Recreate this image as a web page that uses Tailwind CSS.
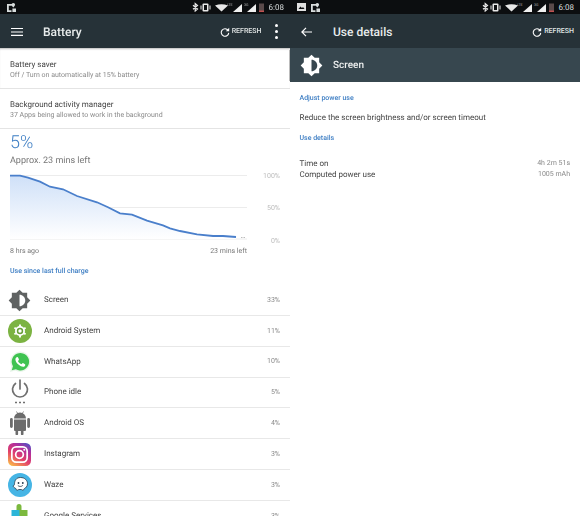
<!DOCTYPE html>
<html lang="en">
<head>
<meta charset="UTF-8">
<title>Battery</title>
<script src="https://cdn.jsdelivr.net/npm/@tailwindcss/browser@4"></script>
</head>
<body class="w-[580px] h-[516px] overflow-hidden bg-white font-['Roboto',sans-serif] [text-rendering:geometricPrecision]">
<div class="flex h-[516px] blur-[0.3px]">

  <!-- left: battery -->
  <div class="relative w-[290px] h-[516px] overflow-hidden flex flex-col">
    <div class="h-[14px] shrink-0 bg-[#0c0e10] flex items-center pl-[7px] pr-[6px]">
      <svg class="w-[9px] h-[9px]" viewBox="0 0 10 10"><path fill="#d8dcdc" d="M0 1h6v2H2v5h3v2H0zM7 0a2 2 0 0 1 2 2c0 1-2 3-2 3S5 3 5 2a2 2 0 0 1 2-2zM6 6h4v4H6z"/></svg>
      <div class="flex-1"></div>
      <svg class="w-[76px] h-[10px]" viewBox="0 0 76 10">
        <path fill="none" stroke="#e8e8e8" stroke-width="1.200" d="M2 3.200L6.500 7 4.200 9V1.500L6.500 3.500 2 7.200"/>
        <rect x="11.500" y="1.500" width="6" height="8" rx="1" fill="#e8e8e8"/><rect x="13" y="3" width="3" height="5" fill="#0c0e10"/><rect x="9.500" y="3.500" width="1" height="4" fill="#e8e8e8"/><rect x="18.500" y="3.500" width="1" height="4" fill="#e8e8e8"/>
        <path fill="#e8e8e8" d="M24 3.500Q30.500 1 37 3.500L30.500 9.500z"/>
        <text x="36" y="3.500" font-size="3.600" fill="#b0b0b0">LTE</text>
        <path fill="#f0f0f0" d="M42 10l9-8v8z"/>
        <text x="53" y="3.500" font-size="3.600" fill="#b0b0b0">3G</text>
        <path fill="#f0f0f0" d="M56 10l9-8v8z"/>
        <rect x="68" y="1.500" width="5" height="8.500" fill="#5a4a4a"/><rect x="68" y="8.500" width="5" height="1.500" fill="#c05050"/>
      </svg>
      <span class="ml-[2px] pt-[2px] text-[8px] text-[#d8dcdc]">6:08</span>
    </div>
    <div class="h-[34px] shrink-0 bg-[#263238] flex items-center pt-[1px]">
      <svg class="ml-[11px] w-[12px] h-[8px]" viewBox="0 0 12 8"><path fill="#fff" d="M0 0h12v1.100H0zM0 3.400h12v1.100H0zM0 6.800h12v1.100H0z"/></svg>
      <span class="ml-[20px] text-[12px] font-medium text-[#e8ecec]">Battery</span>
      <div class="flex-1"></div>
      <svg class="w-[10px] h-[10px]" viewBox="0 0 24 24"><path fill="none" stroke="#fff" stroke-width="2.600" d="M19.500 8A9 9 0 1 0 21 14"/><path fill="#fff" d="M22 2v8h-8z"/></svg>
      <span class="ml-[2px] text-[7px] font-medium text-[#dfe3e3]">REFRESH</span>
      <div class="ml-[13.500px] mr-[12px] flex flex-col gap-[3px]">
        <div class="w-[3px] h-[3px] rounded-full bg-white"></div>
        <div class="w-[3px] h-[3px] rounded-full bg-white"></div>
        <div class="w-[3px] h-[3px] rounded-full bg-white"></div>
      </div>
    </div>

    <div class="h-[41px] shrink-0 border-b border-[#e4e4e4] pl-[10px] pt-[11px] shadow-[inset_0_2px_2px_-1px_#bbb]">
      <div class="text-[8px] leading-[11px] text-[#444]">Battery saver</div>
      <div class="text-[7px] leading-[10px] text-[#8a8a8a]">Off / Turn on automatically at 15% battery</div>
    </div>
    <div class="h-[40px] shrink-0 border-b border-[#e4e4e4] pl-[10px] pt-[10px]">
      <div class="text-[8px] leading-[11px] text-[#444]">Background activity manager</div>
      <div class="text-[7px] leading-[10px] text-[#8a8a8a]">37 Apps being allowed to work in the background</div>
    </div>
    <div class="absolute left-[288.500px] top-[50px] w-[1.500px] h-[31px] bg-[#bbb]"></div>

    <div class="pl-[10px] shrink-0 h-[43px]">
      <div class="text-[18px] leading-[21px] mt-[3px] font-light text-[#3f7fc4]">5%</div>
      <div class="text-[9px] leading-[12px] mt-[2px] text-[#777]">Approx. 23 mins left</div>
    </div>

    <svg class="shrink-0 h-[68px] w-[290px]" viewBox="0 0 290 68">
      <defs><linearGradient id="fill" x1="0" y1="0" x2="0" y2="1"><stop offset="0" stop-color="#cfe0f8"/><stop offset="1" stop-color="#ffffff"/></linearGradient></defs>
      <path d="M10 3.500H247M10 35.500H247M10 67H247" stroke="#ececec" stroke-width="1"/>
      <path fill="url(#fill)" d="M10 3.700L20 3.700 28 5.700 40 9.700 50 14.700 63 17.300 77 24 97 30.300 108 35.300 120 41.300 132 42.700 147 48.700 163 53.300 170 56.300 180 59 197 62.300 213 64 223 64 236 65V67H10z"/>
      <path fill="none" stroke="#4a7fcb" stroke-width="1.800" d="M10 3.700L20 3.700 28 5.700 40 9.700 50 14.700 63 17.300 77 24 97 30.300 108 35.300 120 41.300 132 42.700 147 48.700 163 53.300 170 56.300 180 59 197 62.300 213 64 223 64 236 65"/>
      <path d="M241 65.500h1.500M243.500 65.500h1.500" stroke="#bbb" stroke-width="1"/>
    </svg>
    <div class="h-0 relative">
      <span class="absolute right-[10px] top-[-68px] text-[7px] leading-[9px] text-[#bbb]">100%</span>
      <span class="absolute right-[10px] top-[-36px] text-[7px] leading-[9px] text-[#bbb]">50%</span>
      <span class="absolute right-[10px] top-[-3px] text-[7px] leading-[9px] text-[#bbb]">0%</span>
    </div>
    <div class="flex justify-between w-[247px] pl-[10px] mt-[6px] text-[7px] leading-[10px] text-[#777] shrink-0">
      <span>8 hrs ago</span><span>23 mins left</span>
    </div>
    <div class="pl-[10px] mt-[10px] text-[7px] font-medium leading-[10px] text-[#3f7fc4] shrink-0">Use since last full charge</div>

    <div class="mt-[9.200px] flex flex-col">
      <div class="h-[30.800px] shrink-0 flex items-center border-b border-[#e8e8e8] pr-[10px]">
        <div class="w-[44px] flex justify-center pr-[5px]">
          <svg class="w-[23px] h-[23px]" viewBox="0 0 24 24"><path fill="#5f6262" fill-rule="evenodd" d="M20 15.310L23.310 12 20 8.690V4h-4.690L12 .69 8.690 4H4v4.690L.69 12 4 15.310V20h4.690L12 23.310 15.310 20H20v-4.690zM12 18V6c3.310 0 6 2.690 6 6s-2.690 6-6 6z"/></svg>
        </div>
        <span class="text-[8px] text-[#444]">Screen</span><span class="ml-auto text-[7px] text-[#888]">33%</span>
      </div>
      <div class="h-[30.800px] shrink-0 flex items-center border-b border-[#e8e8e8] pr-[10px]">
        <div class="w-[44px] flex justify-center pr-[5px]">
          <svg class="w-[24px] h-[24px]" viewBox="0 0 24 24"><circle cx="12" cy="12" r="12" fill="#7cb342"/><circle cx="12" cy="12" r="5" fill="#fff"/><path stroke="#fff" stroke-width="1.900" d="M12 5.500v13M6.400 8.750l11.200 6.500M6.400 15.250l11.200-6.500"/><circle cx="12" cy="12" r="3.200" fill="#689f38"/><circle cx="12" cy="12" r="1.700" fill="#fff"/></svg>
        </div>
        <span class="text-[8px] text-[#444]">Android System</span><span class="ml-auto text-[7px] text-[#888]">11%</span>
      </div>
      <div class="h-[30.800px] shrink-0 flex items-center border-b border-[#e8e8e8] pr-[10px]">
        <div class="w-[44px] flex justify-center pr-[5px]">
          <svg class="w-[22px] h-[22px]" viewBox="0 0 24 24"><path fill="#e8f5e9" d="M1 23l1.700-6A11 11 0 1 1 7 21.300z"/><path fill="#3fc351" d="M3 21l1.300-4.400A9.500 9.500 0 1 1 7.500 19.800z"/><path fill="#fff" d="M9 6.500c-.8 0-2 1-2 2.700 0 2 1.500 4 3.300 5.600 2 1.700 3.700 2.400 5 2.400 1.500 0 2.500-1.300 2.500-2.300 0-.4-2.300-1.700-2.700-1.700-.4 0-1 1.300-1.500 1.300-.8 0-3.700-2.500-3.700-3.500 0-.5 1-1 1-1.500S10 6.500 9 6.500z"/></svg>
        </div>
        <span class="text-[8px] text-[#444]">WhatsApp</span><span class="ml-auto text-[7px] text-[#888]">10%</span>
      </div>
      <div class="h-[30.800px] shrink-0 flex items-center border-b border-[#e8e8e8] pr-[10px]">
        <div class="w-[44px] flex justify-center pr-[5px]">
          <svg class="w-[20px] h-[26px]" viewBox="0 0 20 26"><path fill="none" stroke="#707070" stroke-width="1.700" stroke-linecap="round" d="M10 1v9M5.500 4.500a7.500 7.500 0 1 0 9 0"/><path stroke="#707070" stroke-width="1.500" stroke-dasharray="2 2" d="M5 23.500h10"/></svg>
        </div>
        <span class="text-[8px] text-[#444]">Phone idle</span><span class="ml-auto text-[7px] text-[#888]">5%</span>
      </div>
      <div class="h-[30.800px] shrink-0 flex items-center border-b border-[#e8e8e8] pr-[10px]">
        <div class="w-[44px] flex justify-center pr-[5px]">
          <svg class="w-[22px] h-[24px]" viewBox="0 0 22 24"><path fill="#6c6c6c" d="M5 7.500a6 6 0 0 1 12 0zM5 8.500h12v10.500a1 1 0 0 1-1 1h-1.500v3a1.300 1.300 0 0 1-2.600 0v-3H9.100v3a1.300 1.300 0 0 1-2.600 0v-3H6a1 1 0 0 1-1-1zM1 8.500a1.400 1.400 0 0 1 2.800 0v7a1.400 1.400 0 0 1-2.800 0zM18.200 8.500a1.400 1.400 0 0 1 2.800 0v7a1.400 1.400 0 0 1-2.800 0z"/><path stroke="#6c6c6c" stroke-width=".8" d="M7.500 0.500l1.500 2.500M14.500 0.500L13 3"/></svg>
        </div>
        <span class="text-[8px] text-[#444]">Android OS</span><span class="ml-auto text-[7px] text-[#888]">4%</span>
      </div>
      <div class="h-[30.800px] shrink-0 flex items-center border-b border-[#e8e8e8] pr-[10px]">
        <div class="w-[44px] flex justify-center pr-[5px]">
          <svg class="w-[23px] h-[23px]" viewBox="0 0 24 24"><defs><linearGradient id="ig" x1="0.200" y1="1" x2="0.800" y2="0"><stop offset="0" stop-color="#f9b34a"/><stop offset="0.400" stop-color="#e2406a"/><stop offset="0.750" stop-color="#b32f9c"/><stop offset="1" stop-color="#5a4fc0"/></linearGradient></defs><rect width="24" height="24" rx="5.500" fill="url(#ig)"/><rect x="4" y="4" width="16" height="16" rx="4.500" fill="none" stroke="#fff" stroke-width="1.800"/><circle cx="12" cy="12" r="4" fill="none" stroke="#fff" stroke-width="1.800"/><circle cx="17" cy="7" r="1.100" fill="#fff"/></svg>
        </div>
        <span class="text-[8px] text-[#444]">Instagram</span><span class="ml-auto text-[7px] text-[#888]">3%</span>
      </div>
      <div class="h-[30.800px] shrink-0 flex items-center border-b border-[#e8e8e8] pr-[10px]">
        <div class="w-[44px] flex justify-center pr-[5px]">
          <svg class="w-[24px] h-[24px]" viewBox="0 0 24 24"><circle cx="12" cy="12" r="12" fill="#46b5e5"/><path fill="#fff" stroke="#24384a" stroke-width=".8" d="M12.500 4.500c4.300 0 7 2.900 7 6.200 0 2.800-1.900 4.300-3.200 5-.3 1.600-2.200 1.900-2.900.8h-2.700c-.8 1.300-2.800.7-2.900-1-1.100-.4-2.300-1.200-2.800-2.600 1-.2 1.400-.7 1.500-2.200.1-3 1.700-6.200 6-6.200z"/><circle cx="10.500" cy="10" r=".9" fill="#24384a"/><circle cx="14.800" cy="10" r=".9" fill="#24384a"/><path fill="none" stroke="#24384a" stroke-width=".8" d="M9.800 12.400c1 1.400 3.900 1.400 5 0"/></svg>
        </div>
        <span class="text-[8px] text-[#444]">Waze</span><span class="ml-auto text-[7px] text-[#888]">3%</span>
      </div>
      <div class="h-[30.800px] shrink-0 flex items-center pr-[10px]">
        <div class="w-[44px] flex justify-center pr-[5px]">
          <svg class="w-[24px] h-[24px]" viewBox="0 0 24 24"><path fill="#7cb93e" d="M8.500 2.500a2.500 2.500 0 0 1 5 0V6h6v7H8.500z"/><path fill="#2bb5d8" d="M3.500 6h8v18h-8z"/><path fill="#f4b92a" d="M11.500 13h8v11h-8z"/></svg>
        </div>
        <span class="text-[8px] text-[#444]">Google Services</span><span class="ml-auto text-[7px] text-[#888]">3%</span>
      </div>
    </div>
  </div>

  <!-- right: use details -->
  <div class="w-[290px] h-[516px] overflow-hidden flex flex-col">
    <div class="h-[14px] shrink-0 bg-[#0c0e10] flex items-center pl-[7px] pr-[6px]">
      <svg class="w-[9px] h-[8px]" viewBox="0 0 9 8"><path fill="#e0e0e0" d="M0 0h9v8H0z"/><path fill="#0c0e10" d="M1.500 6l2-2.500 1.500 1.500 1-1 1.500 2z"/></svg>
      <svg class="ml-[5px] w-[9px] h-[9px]" viewBox="0 0 10 10"><path fill="#d8dcdc" d="M0 1h6v2H2v5h3v2H0zM7 0a2 2 0 0 1 2 2c0 1-2 3-2 3S5 3 5 2a2 2 0 0 1 2-2zM6 6h4v4H6z"/></svg>
      <div class="flex-1"></div>
      <svg class="w-[76px] h-[10px]" viewBox="0 0 76 10">
        <path fill="none" stroke="#e8e8e8" stroke-width="1.200" d="M2 3.200L6.500 7 4.200 9V1.500L6.500 3.500 2 7.200"/>
        <rect x="11.500" y="1.500" width="6" height="8" rx="1" fill="#e8e8e8"/><rect x="13" y="3" width="3" height="5" fill="#0c0e10"/><rect x="9.500" y="3.500" width="1" height="4" fill="#e8e8e8"/><rect x="18.500" y="3.500" width="1" height="4" fill="#e8e8e8"/>
        <path fill="#e8e8e8" d="M24 3.500Q30.500 1 37 3.500L30.500 9.500z"/>
        <text x="36" y="3.500" font-size="3.600" fill="#b0b0b0">LTE</text>
        <path fill="#f0f0f0" d="M42 10l9-8v8z"/>
        <text x="53" y="3.500" font-size="3.600" fill="#b0b0b0">3G</text>
        <path fill="#f0f0f0" d="M56 10l9-8v8z"/>
        <rect x="68" y="1.500" width="5" height="8.500" fill="#5a4a4a"/><rect x="68" y="8.500" width="5" height="1.500" fill="#c05050"/>
      </svg>
      <span class="ml-[2px] pt-[2px] text-[8px] text-[#d8dcdc]">6:08</span>
    </div>
    <div class="h-[34px] shrink-0 bg-[#263238] flex items-center pr-[6px] pt-[1px]">
      <svg class="ml-[11px] w-[11px] h-[10px]" viewBox="0 0 11 10"><path fill="none" stroke="#fff" stroke-width="1.200" d="M11 5H1M5 .8L.9 5 5 9.200"/></svg>
      <span class="ml-[21px] text-[12px] font-medium text-[#e8ecec]">Use details</span>
      <div class="flex-1"></div>
      <svg class="w-[10px] h-[10px]" viewBox="0 0 24 24"><path fill="none" stroke="#fff" stroke-width="2.600" d="M19.500 8A9 9 0 1 0 21 14"/><path fill="#fff" d="M22 2v8h-8z"/></svg>
      <span class="ml-[2px] text-[7px] font-medium text-[#dfe3e3]">REFRESH</span>
    </div>
    <div class="h-[34px] shrink-0 bg-[#37474f] flex items-center">
      <svg class="ml-[10px] w-[23px] h-[23px]" viewBox="0 0 24 24"><path fill="#fff" fill-rule="evenodd" d="M20 15.310L23.310 12 20 8.690V4h-4.690L12 .69 8.690 4H4v4.690L.69 12 4 15.310V20h4.690L12 23.310 15.310 20H20v-4.690zM12 18V6c3.310 0 6 2.690 6 6s-2.690 6-6 6z"/></svg>
      <span class="ml-[10px] pt-[1px] text-[10px] font-medium text-[#eef0f0]">Screen</span>
    </div>
    <div class="pl-[9.500px] pr-[10px]">
      <div class="mt-[10.500px] text-[7px] font-medium leading-[10px] text-[#3f7fc4]">Adjust power use</div>
      <div class="mt-[9px] text-[8px] leading-[11px] text-[#444]">Reduce the screen brightness and/or screen timeout</div>
      <div class="mt-[10px] text-[7px] font-medium leading-[10px] text-[#3f7fc4]">Use details</div>
      <div class="mt-[15px] flex justify-between items-center leading-[11.500px]"><span class="text-[8px] text-[#444]">Time on</span><span class="text-[7px] text-[#888]">4h 2m 51s</span></div>
      <div class="flex justify-between items-center leading-[11.500px]"><span class="text-[8px] text-[#444]">Computed power use</span><span class="text-[7px] text-[#888]">1005 mAh</span></div>
    </div>
  </div>
</div>
</body>
</html>
